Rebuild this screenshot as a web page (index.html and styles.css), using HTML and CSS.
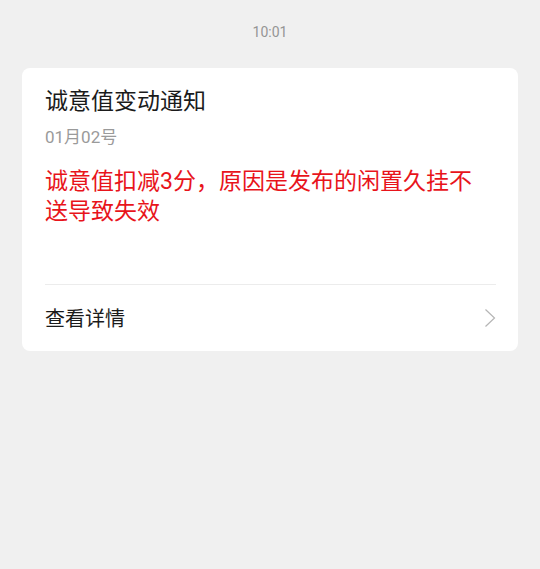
FILE: index.html
```html
<!DOCTYPE html>
<html lang="zh-CN">
<head>
<meta charset="utf-8">
<link rel="stylesheet" href="styles.css">
</head>
<body>
<div class="time">10:01</div>
<div class="card">
  <div class="title">诚意值变动通知</div>
  <div class="date">01月02号</div>
  <div class="content">诚意值扣减3分，原因是发布的闲置久挂不送导致失效</div>
  <div class="divider"></div>
  <div class="row">
    <span class="row-label">查看详情</span>
    <svg class="chev" width="12" height="20" viewBox="0 0 12 20"><path d="M1.5 1.5 L10.5 10 L1.5 18.5" fill="none" stroke="#b5b5b5" stroke-width="1.2"/></svg>
  </div>
</div>
</body>
</html>
```
FILE: styles.css
```css
html, body {
  margin: 0;
  padding: 0;
  background: #f0f0f0;
  font-family: "Roboto", "Noto Sans CJK SC", sans-serif;
}
.time {
  padding-top: 22px;
  height: 20px;
  line-height: 20px;
  text-align: center;
  font-size: 14px;
  color: #959595;
}
.card {
  margin: 26px 22px 0;
  background: #fff;
  border-radius: 8px;
  padding: 18px 22px 0 23px;
}
.title {
  font-size: 23px;
  line-height: 32px;
  color: #1b1b1b;
}
.date {
  margin-top: 7px;
  font-size: 17px;
  line-height: 24px;
  color: #9a9a9a;
}
.content {
  margin-top: 18px;
  padding-right: 12px;
  font-size: 23px;
  line-height: 30px;
  color: #e8141b;
}
.divider {
  margin-top: 57px;
  height: 1px;
  background: #ececec;
}
.row {
  display: flex;
  align-items: center;
  justify-content: space-between;
  height: 66px;
}
.row-label {
  font-size: 20px;
  color: #1b1b1b;
  line-height: 28px;
  margin-top: 2px;
}
```
